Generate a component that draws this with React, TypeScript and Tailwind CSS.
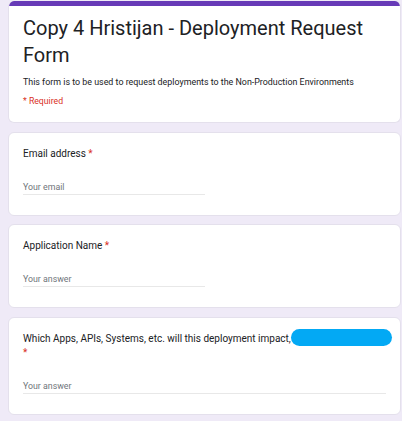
import React from "react";

const Req = () => <span className="text-[#d93025]"> *</span>;

const Question = ({
  label,
  placeholder,
  wide,
  gap,
}: {
  label: React.ReactNode;
  placeholder: string;
  wide?: boolean;
  gap: string;
}) => (
  <div className="bg-white rounded-[6px] border border-[#e4e0ec] pl-[14px] pr-[6px] pt-[14px] pb-[20px]">
    <div className="text-[10px] leading-[13px] text-[#202124]">{label}</div>
    <div
      className={
        gap +
        " border-b border-[#e8e8e8] text-[8.8px] leading-[13px] text-[#70757a] " +
        (wide ? "w-[363px]" : "w-[182px]")
      }
    >
      {placeholder}
    </div>
  </div>
);

export default function App() {
  return (
    <div
      className="w-[402px] h-[421px] bg-[#efeaf7] pl-[8px] pr-[1px] pt-[1px] overflow-hidden"
      style={{ fontFamily: "Roboto, 'Noto Sans', Arial, sans-serif" }}
    >
      <div className="flex flex-col gap-[8.5px]">
        <div className="bg-white rounded-[6px] overflow-hidden border-x border-b border-[#e4e0ec]">
          <div className="h-[5px] bg-[#673ab7]" />
          <div className="px-[14px] pt-[9px] pb-[14px]">
            <h1 className="text-[20px] leading-[27px] text-[#202124]">
              Copy 4 Hristijan - Deployment Request Form
            </h1>
            <p className="mt-[7px] text-[8.9px] leading-[13px] text-[#202124]">
              This form is to be used to request deployments to the Non-Production Environments
            </p>
            <p className="mt-[6px] text-[8.7px] leading-[13px] text-[#d93025]">* Required</p>
          </div>
        </div>

        <Question label={<>Email address<Req /></>} placeholder="Your email" gap="mt-[21px]" />
        <Question label={<>Application Name<Req /></>} placeholder="Your answer" gap="mt-[21px]" />
        <Question
          wide
          gap="mt-[21px]"
          label={
            <>
              Which Apps, APIs, Systems, etc. will this deployment impact,
              <span className="inline-block align-middle w-[101px] h-[17px] rounded-full bg-[#03a9f4] -mt-[3px]" />
              <br />
              <span className="text-[#d93025]">*</span>
            </>
          }
          placeholder="Your answer"
        />
      </div>
    </div>
  );
}
